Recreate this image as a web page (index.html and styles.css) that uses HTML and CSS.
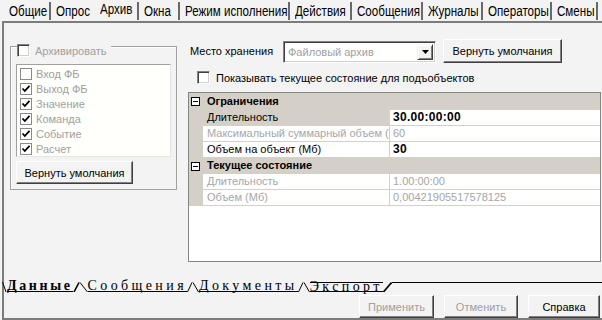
FILE: index.html
```html
<!DOCTYPE html>
<html lang="ru">
<head>
<meta charset="utf-8">
<title>Архив</title>
<link rel="stylesheet" href="styles.css">
</head>
<body>
<div class="tabs">
  <div class="tab t1"><span class="tl">Общие</span></div>
  <div class="tab t2 nosep"><span class="tl">Опрос</span></div>
  <div class="tab t3 sel"><span class="tl">Архив</span></div>
  <div class="tab t4"><span class="tl">Окна</span></div>
  <div class="tab t5"><span class="tl">Режим исполнения</span></div>
  <div class="tab t6"><span class="tl">Действия</span></div>
  <div class="tab t7"><span class="tl">Сообщения</span></div>
  <div class="tab t8"><span class="tl">Журналы</span></div>
  <div class="tab t9"><span class="tl">Операторы</span></div>
  <div class="tab t10"><span class="tl">Смены</span></div>
</div>
<div class="frame">
  <div class="main">
    <div class="left">
      <div class="group">
        <div class="legend"><span class="cb3d"></span><span class="dim">Архивировать</span></div>
        <div class="list">
          <div class="item"><span class="cb"></span>Вход ФБ</div>
          <div class="item"><span class="cb"><svg width="10" height="10" viewBox="0 0 10 10"><polyline points="1.5,4.5 3.8,7 8.5,1.8" fill="none" stroke="#000" stroke-width="1.8"/></svg></span>Выход ФБ</div>
          <div class="item"><span class="cb"><svg width="10" height="10" viewBox="0 0 10 10"><polyline points="1.5,4.5 3.8,7 8.5,1.8" fill="none" stroke="#000" stroke-width="1.8"/></svg></span>Значение</div>
          <div class="item"><span class="cb"><svg width="10" height="10" viewBox="0 0 10 10"><polyline points="1.5,4.5 3.8,7 8.5,1.8" fill="none" stroke="#000" stroke-width="1.8"/></svg></span>Команда</div>
          <div class="item"><span class="cb"><svg width="10" height="10" viewBox="0 0 10 10"><polyline points="1.5,4.5 3.8,7 8.5,1.8" fill="none" stroke="#000" stroke-width="1.8"/></svg></span>Событие</div>
          <div class="item"><span class="cb"><svg width="10" height="10" viewBox="0 0 10 10"><polyline points="1.5,4.5 3.8,7 8.5,1.8" fill="none" stroke="#000" stroke-width="1.8"/></svg></span>Расчет</div>
        </div>
        <div class="btn btn-reset">Вернуть умолчания</div>
      </div>
    </div>
    <div class="right">
      <div class="store-row">
        <span class="store-label">Место хранения</span>
        <div class="combo">
          <span class="combo-text">Файловый архив</span>
          <span class="combo-btn"><svg width="7" height="4" viewBox="0 0 7 4"><polygon points="0,0 7,0 3.5,4" fill="#000"/></svg></span>
        </div>
        <div class="btn btn-def">Вернуть умолчания</div>
      </div>
      <div class="show-row"><span class="cb3d"></span><span class="show-text">Показывать текущее состояние для подъобъектов</span></div>
      <div class="grid">
        <div class="row head first"><span class="gut"><span class="minus"></span></span><span class="hname">Ограничения</span></div>
        <div class="row"><span class="gut"></span><span class="name selname">Длительность</span><span class="val b">30.00:00:00</span></div>
        <div class="row dis"><span class="gut"></span><span class="name">Максимальный суммарный объем (</span><span class="val">60</span></div>
        <div class="row"><span class="gut"></span><span class="name">Объем на объект (Мб)</span><span class="val b">30</span></div>
        <div class="row head"><span class="gut"><span class="minus"></span></span><span class="hname">Текущее состояние</span></div>
        <div class="row dis"><span class="gut"></span><span class="name">Длительность</span><span class="val">1.00:00:00</span></div>
        <div class="row dis"><span class="gut"></span><span class="name">Объем (Мб)</span><span class="val">0,00421905517578125</span></div>
      </div>
    </div>
  </div>
  <div class="sheets">
    <svg class="slant" width="5" height="10" viewBox="0 0 5 10"><line x1="0.5" y1="0" x2="4" y2="10" stroke="#000" stroke-width="1"/></svg>
    <span class="sheet active">Данные</span>
    <svg class="peak" width="15" height="10" viewBox="0 0 15 10"><line x1="1" y1="10" x2="6" y2="0.5" stroke="#000" stroke-width="1.6"/><line x1="7" y1="0.5" x2="14.5" y2="10" stroke="#000" stroke-width="1"/></svg>
    <span class="sheet">Сообщения</span>
    <svg class="peak" width="12" height="10" viewBox="0 0 12 10"><line x1="0.5" y1="10" x2="5" y2="0.5" stroke="#000" stroke-width="1"/><line x1="6" y1="0.5" x2="11.5" y2="10" stroke="#000" stroke-width="1"/></svg>
    <span class="sheet">Документы</span>
    <svg class="peak" width="12" height="10" viewBox="0 0 12 10"><line x1="0.5" y1="10" x2="5" y2="0.5" stroke="#000" stroke-width="1"/><line x1="6" y1="0.5" x2="11.5" y2="10" stroke="#000" stroke-width="1"/></svg>
    <span class="sheet last">Экспорт</span>
    <svg class="slant" width="9" height="10" viewBox="0 0 9 10"><line x1="0.5" y1="10" x2="8.5" y2="0.5" stroke="#000" stroke-width="1.6"/></svg>
    <span class="sheet-fill"></span>
  </div>
  <div class="actions">
    <div class="btn btn-apply dimtext">Применить</div>
    <div class="btn btn-cancel dimtext">Отменить</div>
    <div class="btn btn-help">Справка</div>
  </div>
</div>
</body>
</html>
```
FILE: styles.css
```css
html, body {
  margin: 0;
  padding: 0;
}
body {
  width: 602px;
  height: 320px;
  overflow: hidden;
  background: #f3f3f3;
  font-family: "Liberation Sans", Arial, sans-serif;
  font-size: 11px;
  color: #000;
}

/* top tabs */
.tabs {
  display: flex;
  height: 21px;
  padding-left: 3px;
  font-family: "Liberation Sans", Arial, sans-serif;
  font-size: 11.6px;
}
.tab {
  box-sizing: border-box;
  margin-top: 2px;
  height: 18px;
  line-height: 18px;
  padding-left: 5px;
  border-right: 2px solid #6a6a6a;
  white-space: nowrap;
}
.tl {
  display: inline-block;
  transform: scaleY(1.22);
  transform-origin: 50% 55%;
}
.tab.nosep { border-right-color: transparent; }
.tab.sel { line-height: 14px; }
.t1 { width: 48px; padding-left: 6px; }
.t2 { width: 44px; }
.t3 { width: 44px; }
.t4 { width: 41px; }
.t5 { width: 110px; }
.t6 { width: 62px; }
.t7 { width: 71px; }
.t8 { width: 60px; }
.t9 { width: 69px; }
.t10 { width: 46px; }

/* frame */
.frame {
  margin-left: 2px;
  height: 295px;
  border-top: 2px solid #7c7c7c;
  border-left: 2px solid #7c7c7c;
  border-bottom: 2px solid #7c7c7c;
  display: flex;
  flex-direction: column;
}
.main {
  display: flex;
  align-items: flex-start;
  padding-top: 16px;
}
.left {
  margin-left: 6px;
  margin-top: 7px;
}
.group {
  position: relative;
  box-sizing: border-box;
  width: 167px;
  height: 144px;
  border: 1px solid #a0a0a0;
  box-shadow: inset 1px 1px #fff;
  padding: 17px 0 0 5px;
}
.legend {
  position: absolute;
  top: -3px;
  left: 6px;
  display: flex;
  align-items: center;
  background: #f3f3f3;
  padding: 0 4px 0 0;
  height: 13px;
}
.dim, .dimtext { color: #a0a0a0; }
.legend .dim { margin-left: 5px; }

.cb3d {
  display: inline-block;
  box-sizing: border-box;
  width: 13px;
  height: 13px;
  background: #fff;
  border: 1px solid;
  border-color: #808080 #fff #fff #808080;
  box-shadow: inset 1px 1px #404040, inset -1px -1px #d4d0c8;
  flex: none;
}

.list {
  box-sizing: border-box;
  width: 155px;
  height: 93px;
  background: #fffffb;
  border: 1px solid;
  border-color: #a0a0a0 #e6e6e6 #e6e6e6 #a0a0a0;
  padding-top: 1px;
  color: #a0a0a0;
}
.item {
  display: flex;
  align-items: center;
  height: 15px;
  padding-left: 3px;
  white-space: nowrap;
}
.cb {
  box-sizing: border-box;
  width: 12px;
  height: 12px;
  border: 1px solid #8a8a8a;
  background: #fff;
  margin-right: 4px;
  display: flex;
  align-items: center;
  justify-content: center;
  flex: none;
}

.btn {
  box-sizing: border-box;
  display: flex;
  align-items: center;
  justify-content: center;
  border: 1px solid;
  border-color: #fff #404040 #404040 #fff;
  box-shadow: inset -1px -1px #808080;
  background: #f3f3f3;
  white-space: nowrap;
}
.btn-reset {
  margin-top: 4px;
  width: 117px;
  height: 23px;
}

/* right column */
.right {
  margin-left: 11px;
  width: 413px;
}
.store-row {
  display: flex;
  align-items: center;
  height: 24px;
}
.store-label {
  box-sizing: border-box;
  width: 95px;
  padding-left: 2px;
  white-space: nowrap;
}
.combo {
  box-sizing: border-box;
  width: 153px;
  height: 22px;
  margin-top: 1px;
  border: 1px solid;
  border-color: #808080 #fff #fff #808080;
  box-shadow: inset 1px 1px #404040, inset -1px -1px #d4d0c8;
  background: #fff;
  display: flex;
  align-items: center;
  padding: 2px 2px 2px 4px;
}
.combo-text {
  flex: 1;
  color: #a0a0a0;
  white-space: nowrap;
}
.combo-btn {
  box-sizing: border-box;
  width: 16px;
  height: 16px;
  border: 1px solid;
  border-color: #f3f3f3 #404040 #404040 #f3f3f3;
  box-shadow: inset 1px 1px #fff, inset -1px -1px #808080;
  background: #f3f3f3;
  display: flex;
  align-items: center;
  justify-content: center;
}
.btn-def {
  margin-left: 7px;
  width: 119px;
  height: 24px;
}
.show-row {
  margin-top: 8px;
  height: 13px;
  display: flex;
  align-items: center;
  padding-left: 9px;
}
.show-text {
  margin-left: 6px;
  white-space: nowrap;
}

/* property grid */
.grid {
  margin-top: 8px;
  box-sizing: border-box;
  height: 170px;
  border: 1px solid #858585;
  background: #fff;
}
.row {
  display: grid;
  grid-template-columns: 14px 187px 1fr;
  height: 16px;
  line-height: 15px;
}
.row.first { height: 17px; line-height: 17px; }
.gut {
  background: #d4d0c8;
  display: flex;
  align-items: center;
  padding-left: 2px;
}
.head {
  background: #d4d0c8;
  grid-template-columns: 14px 1fr;
}
.hname {
  padding-left: 4px;
  font-weight: bold;
  white-space: nowrap;
}
.minus {
  position: relative;
  box-sizing: border-box;
  width: 9px;
  height: 9px;
  border: 1px solid #000;
  background: #fff;
}
.minus::after {
  content: "";
  position: absolute;
  left: 1px;
  top: 3px;
  width: 5px;
  height: 1px;
  background: #000;
}
.name {
  padding-left: 4px;
  border-bottom: 1px solid #d4d0c8;
  border-right: 1px solid #d4d0c8;
  white-space: nowrap;
  overflow: hidden;
}
.selname { background: #d4d0c8; }
.val {
  padding-left: 3px;
  border-bottom: 1px solid #d4d0c8;
  white-space: nowrap;
  overflow: hidden;
}
.val.b {
  font-weight: bold;
  font-size: 12px;
  letter-spacing: 0.3px;
}
.dis .name, .dis .val { color: #a6a6a6; }

/* sheet tabs */
.sheets {
  margin-top: 20px;
  margin-left: -2px;
  display: flex;
  align-items: flex-start;
  height: 10px;
}
.slant, .peak { display: block; flex: none; }
.sheet {
  box-sizing: border-box;
  height: 10px;
  line-height: 7px;
  border-bottom: 1px solid #000;
  font-family: "Liberation Serif", "Times New Roman", serif;
  font-size: 14px;
  letter-spacing: 3.4px;
  white-space: nowrap;
}
.sheet.active {
  font-weight: bold;
  letter-spacing: 2.6px;
}
.sheet.last { border-top: 1px solid #000; }
.sheet-fill {
  flex: 1;
  height: 10px;
  border-top: 1px solid #000;
  box-sizing: border-box;
}

/* bottom buttons */
.actions {
  margin-top: 3px;
  display: flex;
  justify-content: flex-end;
  gap: 10px;
  padding-right: 2px;
}
.actions .btn { height: 23px; }
.btn-apply { width: 75px; }
.btn-cancel { width: 74px; }
.btn-help { width: 72px; }
```
